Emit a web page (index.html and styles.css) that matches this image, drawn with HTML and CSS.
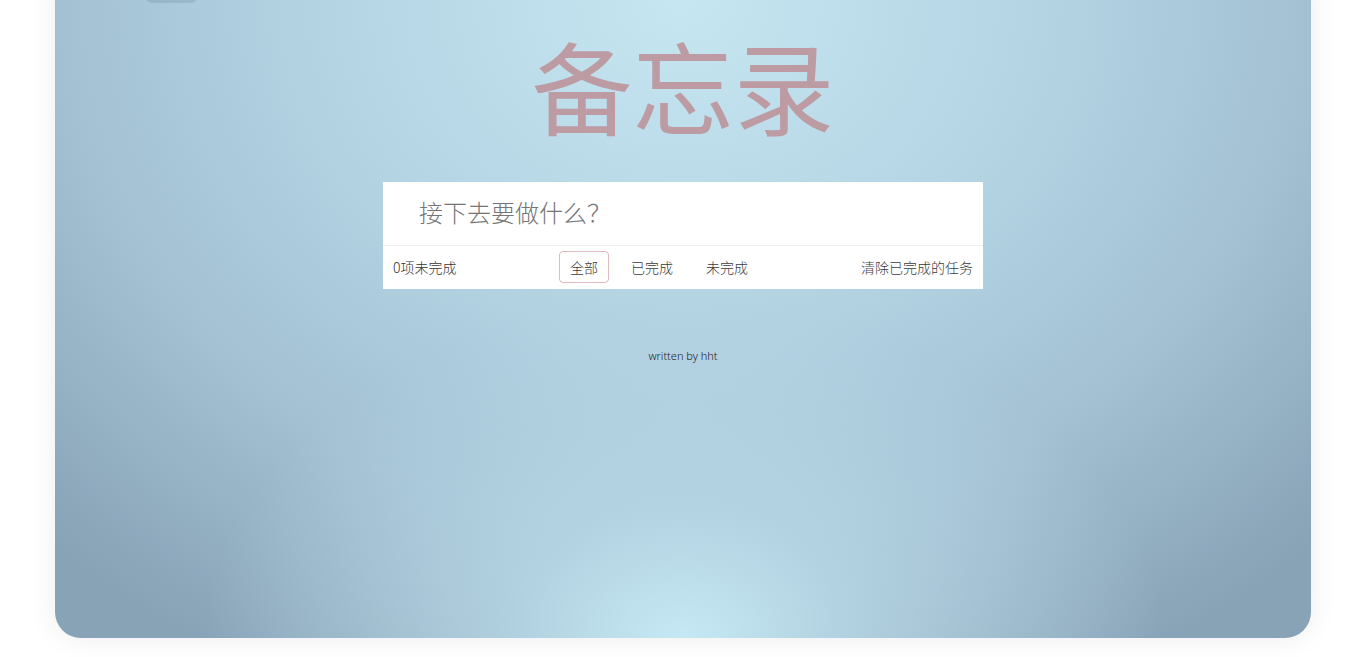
FILE: index.html
```html
<!DOCTYPE html>
<html lang="zh-CN">
<head>
<meta charset="utf-8">
<title>备忘录</title>
<link rel="stylesheet" href="styles.css">
</head>
<body>
<div class="page">
  <div class="card">
    <div class="top-btn"></div>
    <h1 class="title">备忘录</h1>
    <section class="todo">
      <input class="new-todo" type="text" placeholder="接下去要做什么？">
      <footer class="footer">
        <span class="count">0项未完成</span>
        <ul class="filters">
          <li><a class="filter selected">全部</a></li>
          <li><a class="filter">已完成</a></li>
          <li><a class="filter">未完成</a></li>
        </ul>
        <button class="clear">清除已完成的任务</button>
      </footer>
    </section>
    <p class="info">written by hht</p>
  </div>
</div>
</body>
</html>
```
FILE: styles.css
```css
html, body {
  margin: 0;
  padding: 0;
  background: #ffffff;
  height: 657px;
  overflow: hidden;
}
.page {
  padding: 0 55px;
}
.card {
  position: relative;
  margin-top: -40px;
  height: 678px;
  border-radius: 26px;
  box-shadow: 0 0 28px rgba(0, 0, 0, 0.08);
  background:
    radial-gradient(ellipse 480px 330px at 50% 100%, rgba(198, 232, 244, 1) 0%, rgba(188, 220, 234, 0.65) 40%, rgba(180, 210, 226, 0) 100%),
    radial-gradient(ellipse 900px 760px at 50% 6%, #c6e6f1 0%, #b4d4e4 40%, #a2c0d2 70%, #88a2b6 100%);
  display: flex;
  flex-direction: column;
  align-items: center;
  font-family: "Noto Sans CJK SC", "Noto Sans", sans-serif;
}
.top-btn {
  position: absolute;
  left: 90px;
  top: 12px;
  width: 53px;
  height: 31px;
  border-radius: 8px;
  background: rgba(120, 150, 170, 0.35);
}
.title {
  margin: 66px 0 0;
  height: 116px;
  font-size: 101px;
  line-height: 116px;
  font-weight: 400;
  color: #bd9ba3;
  letter-spacing: 0;
}
.todo {
  margin-top: 40px;
  width: 600px;
  background: #fff;
}
.new-todo {
  display: block;
  box-sizing: border-box;
  width: 100%;
  height: 64px;
  border: none;
  border-bottom: 1px solid #efefef;
  outline: none;
  padding: 0 0 4px 36px;
  font-family: "Noto Sans CJK SC", sans-serif;
  font-size: 24px;
  font-weight: 300;
  color: #555;
  background: transparent;
}
.new-todo::placeholder {
  color: #757575;
}
.footer {
  display: flex;
  align-items: center;
  box-sizing: border-box;
  height: 43px;
  padding: 0 10px 1px;
  font-size: 14px;
  font-weight: 300;
  color: #3a3a3a;
}
.count {
  width: 166px;
  color: #333;
}
.filters {
  display: flex;
  gap: 11px;
  list-style: none;
  margin: 0;
  padding: 0;
  flex: 1;
}
.filter {
  display: block;
  box-sizing: border-box;
  height: 32px;
  line-height: 30px;
  padding: 0 10px;
  border: 1px solid transparent;
  border-radius: 4px;
  color: #3a3a3a;
  cursor: pointer;
}
.filter.selected {
  border-color: rgba(200, 130, 140, 0.55);
}
.clear {
  border: none;
  background: none;
  padding: 0;
  font-family: inherit;
  font-size: 14px;
  font-weight: 300;
  color: #3a3a3a;
  cursor: pointer;
}
.info {
  margin: 59px 0 0;
  font-family: "Noto Sans", sans-serif;
  font-size: 11px;
  font-weight: 300;
  color: #222;
}
```
